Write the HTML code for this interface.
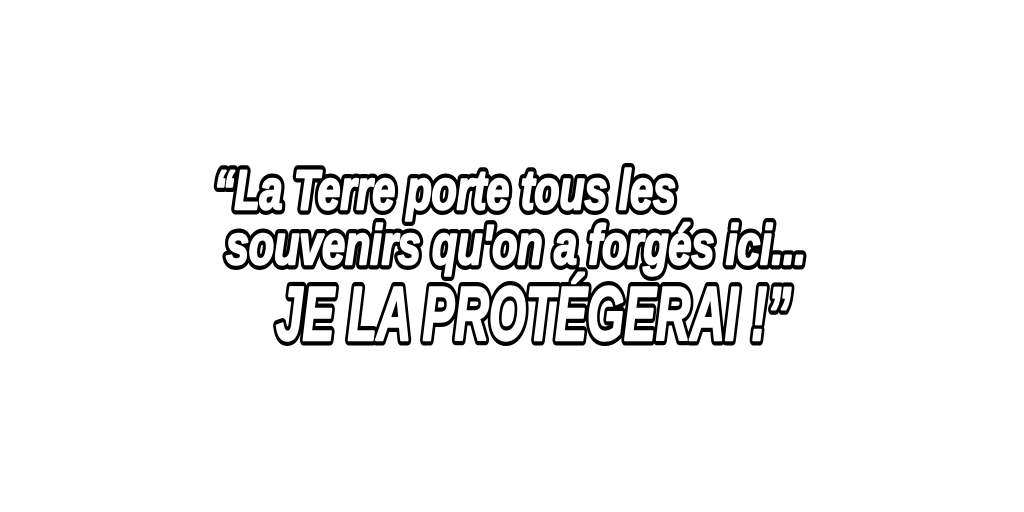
<!DOCTYPE html>
<html>
<head>
<meta charset="utf-8">
<style>
html,body{margin:0;padding:0;background:#fff;width:1024px;height:512px;overflow:hidden}
svg{display:block}
text{font-family:"Liberation Sans",sans-serif;font-weight:bold;font-style:italic;stroke-linejoin:round}
.o{fill:#000;stroke:#000;stroke-width:11}
.i{fill:#fff;stroke:#fff;stroke-width:2.5}
</style>
</head>
<body>
<svg width="1024" height="512" viewBox="0 0 1024 512">
<text class="o" x="214" y="209" font-size="56" textLength="462" lengthAdjust="spacingAndGlyphs">“La Terre porte tous les</text>
<text class="i" x="214" y="209" font-size="56" textLength="462" lengthAdjust="spacingAndGlyphs">“La Terre porte tous les</text>
<text class="o" x="226" y="264" font-size="56" textLength="580" lengthAdjust="spacingAndGlyphs">souvenirs qu'on a forgés ici...</text>
<text class="i" x="226" y="264" font-size="56" textLength="580" lengthAdjust="spacingAndGlyphs">souvenirs qu'on a forgés ici...</text>
<text class="o" x="276" y="340" font-size="76" textLength="515" lengthAdjust="spacingAndGlyphs">JE LA PROTÉGERAI !”</text>
<text class="i" x="276" y="340" font-size="76" textLength="515" lengthAdjust="spacingAndGlyphs">JE LA PROTÉGERAI !”</text>
</svg>
</body>
</html>
